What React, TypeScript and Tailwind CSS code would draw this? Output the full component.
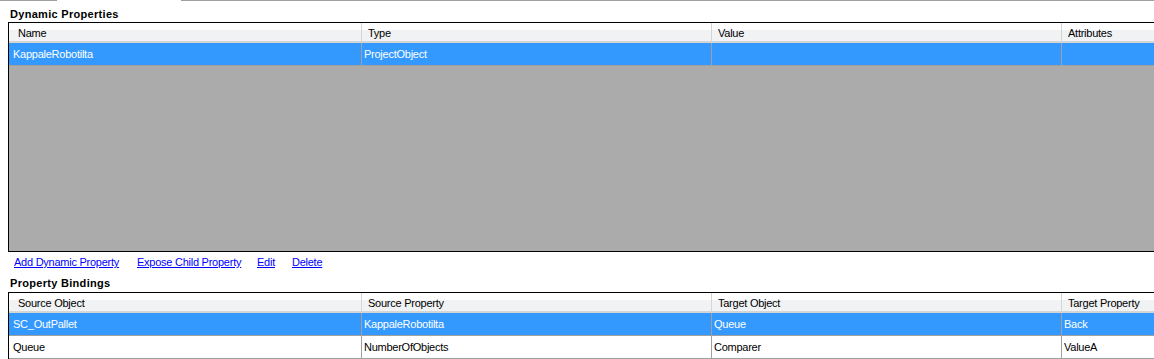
import React from "react";

const headerBg =
  "bg-[linear-gradient(to_bottom,#ffffff_0%,#ffffff_38%,#f1f2f4_38%,#f1f2f4_100%)]";

function Header({ labels }: { labels: string[] }) {
  return (
    <div className={`flex h-[20px] border-b-2 border-[#d5d5d5] ${headerBg}`}>
      <div className="w-[353px] shrink-0 flex items-center pl-[9px] pt-[3px] border-r border-[#d5d5d5]">
        {labels[0]}
      </div>
      <div className="w-[350px] shrink-0 flex items-center pl-[6px] pt-[3px] border-r border-[#d5d5d5]">
        {labels[1]}
      </div>
      <div className="w-[350px] shrink-0 flex items-center pl-[6px] pt-[3px] border-r border-[#d5d5d5]">
        {labels[2]}
      </div>
      <div className="flex-1 flex items-center pl-[6px] pt-[3px]">{labels[3]}</div>
    </div>
  );
}

function Row({ cells, selected }: { cells: string[]; selected?: boolean }) {
  const bg = selected ? "bg-[#3399ff] text-white" : "bg-white text-black";
  return (
    <div className={`flex h-[23px] border-b border-[#a0a0a0] ${bg}`}>
      <div className="w-[353px] shrink-0 flex items-center pl-[4px] border-r border-[#a0a0a0]">
        {cells[0]}
      </div>
      <div className="w-[350px] shrink-0 flex items-center pl-[2px] border-r border-[#a0a0a0]">
        {cells[1]}
      </div>
      <div className="w-[350px] shrink-0 flex items-center pl-[2px] border-r border-[#a0a0a0]">
        {cells[2]}
      </div>
      <div className="flex-1 flex items-center pl-[2px]">{cells[3]}</div>
    </div>
  );
}

export default function App() {
  return (
    <div className="w-[1154px] h-[359px] overflow-hidden bg-white text-[11px] leading-[13px] tracking-[-0.25px] text-black font-['Liberation_Sans',Arial,sans-serif]">
      <div className="flex h-[1px]">
        <div className="w-[57px] bg-[#a0a0a0]" />
        <div className="w-[124px]" />
        <div className="flex-1 bg-[#a0a0a0]" />
      </div>
      <div className="h-[21px] pt-[7px] pl-[10px] font-bold tracking-[0.3px]">Dynamic Properties</div>
      <div className="ml-[8px] h-[230px] border-l border-t border-b border-black bg-[#ababab] flex flex-col">
        <Header labels={["Name", "Type", "Value", "Attributes"]} />
        <Row cells={["KappaleRobotilta", "ProjectObject", "", ""]} selected />
      </div>
      <div className="h-[20px] pt-[4px] pl-[14px] flex text-[#0000ff]">
        <span className="w-[123px] shrink-0">
          <a className="underline cursor-pointer">Add Dynamic Property</a>
        </span>
        <span className="w-[120px] shrink-0">
          <a className="underline cursor-pointer">Expose Child Property</a>
        </span>
        <span className="w-[35px] shrink-0">
          <a className="underline cursor-pointer">Edit</a>
        </span>
        <span>
          <a className="underline cursor-pointer">Delete</a>
        </span>
      </div>
      <div className="h-[20px] pt-[5px] pl-[10px] font-bold tracking-[0.3px]">Property Bindings</div>
      <div className="ml-[8px] border-l border-t border-black flex flex-col">
        <Header labels={["Source Object", "Source Property", "Target Object", "Target Property"]} />
        <Row cells={["SC_OutPallet", "KappaleRobotilta", "Queue", "Back"]} selected />
        <Row cells={["Queue", "NumberOfObjects", "Comparer", "ValueA"]} />
      </div>
    </div>
  );
}
